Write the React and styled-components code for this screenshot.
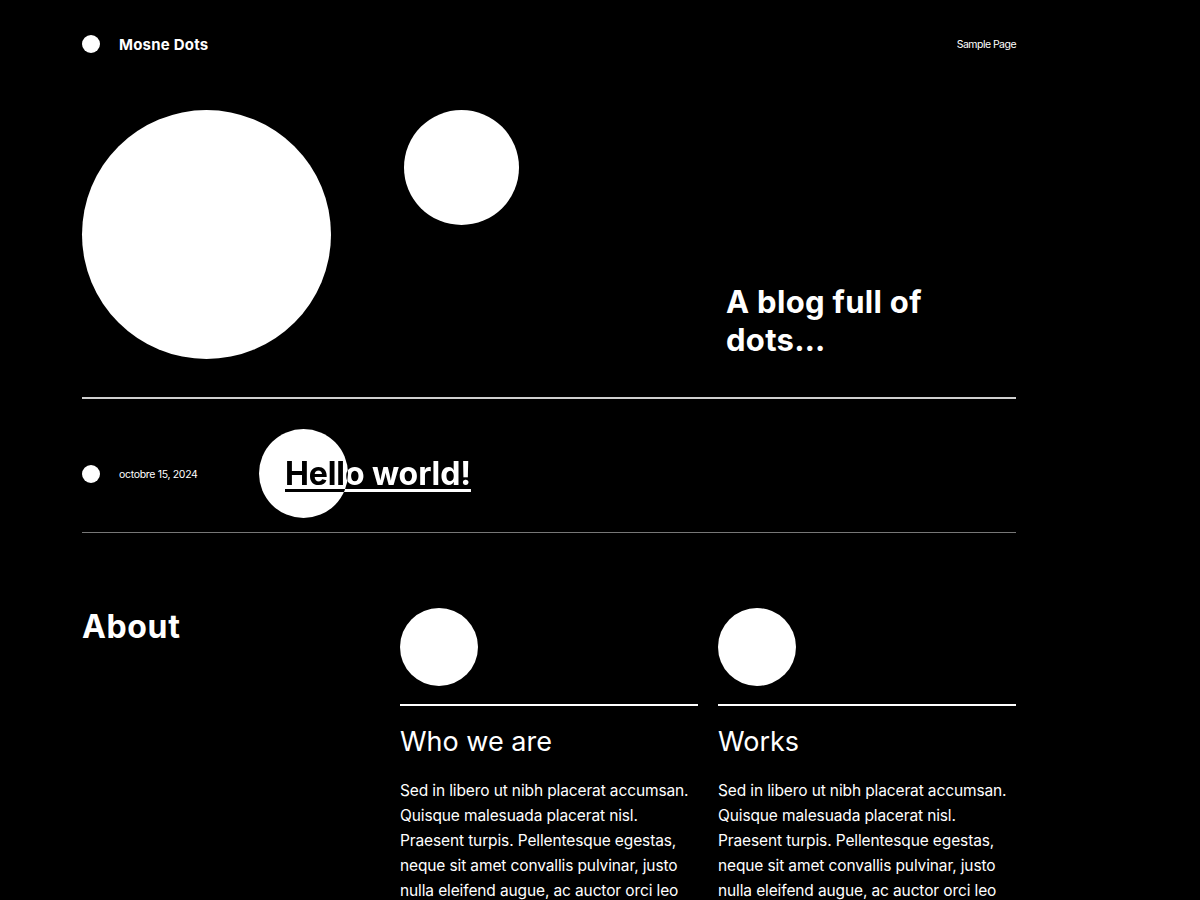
import React from "react";
import styled, { createGlobalStyle } from "styled-components";

const Global = createGlobalStyle`
  html, body { margin: 0; padding: 0; background: #000; }
  body {
    color: #fff;
    font-family: "Inter", "Liberation Sans", sans-serif;
    -webkit-font-smoothing: antialiased;
  }
`;

const Page = styled.div`
  width: 934px;
  padding: 0 0 0 82px;
`;

const Header = styled.header`
  height: 36px;
  padding-top: 26px;
  display: flex;
  align-items: center;
  justify-content: space-between;
`;

const Brand = styled.div`
  display: flex;
  align-items: center;
  gap: 19px;
`;

const Dot = styled.span`
  display: block;
  flex: none;
  width: ${(p) => p.$size}px;
  height: ${(p) => p.$size}px;
  border-radius: 50%;
  background: #fff;
`;

const BrandName = styled.span`
  font-size: 15px;
  font-weight: 700;
  letter-spacing: 0.015em;
`;

const NavLink = styled.a`
  font-size: 10.5px;
  color: #fff;
  text-decoration: none;
  letter-spacing: -0.05em;
`;

const Hero = styled.section`
  margin-top: 48px;
  padding-bottom: 38px;
  display: flex;
  align-items: flex-end;
  border-bottom: 2px solid #cfcfcf;
`;

const SmallCircle = styled(Dot)`
  align-self: flex-start;
  margin-left: 73px;
`;

const Tagline = styled.h1`
  margin: 0 0 0 207px;
  width: 250px;
  font-size: 31px;
  line-height: 38px;
  font-weight: 700;
  letter-spacing: 0.01em;
`;

const PostRow = styled.article`
  display: grid;
  grid-template-columns: 177px 1fr;
  align-items: center;
  padding: 30px 0 14px;
  border-bottom: 1px solid #777;
`;

const PostMeta = styled.div`
  display: flex;
  align-items: center;
  gap: 19px;
  padding-top: 1px;
`;

const DateText = styled.span`
  font-size: 10.5px;
  letter-spacing: -0.03em;
`;

const TitleWrap = styled.div`
  position: relative;
  height: 89px;
  display: flex;
  align-items: center;
  padding-left: 26px;
  isolation: isolate;
`;

const TitleCircle = styled.span`
  position: absolute;
  left: 0;
  top: 0;
  width: 89px;
  height: 89px;
  border-radius: 50%;
  background: #fff;
`;

const PostTitle = styled.h2`
  position: relative;
  margin: 0;
  padding-top: 1px;
  font-size: 32px;
  line-height: 38px;
  font-weight: 700;
  letter-spacing: -0.003em;
  mix-blend-mode: difference;
  a {
    color: #fff;
    text-decoration: underline;
    text-decoration-thickness: 3px;
    text-underline-offset: 4px;
  }
`;

const About = styled.section`
  display: grid;
  grid-template-columns: repeat(3, 298px);
  column-gap: 20px;
  padding-top: 75px;
`;

const AboutTitle = styled.h2`
  margin: 0;
  font-size: 32px;
  line-height: 38px;
  font-weight: 700;
  letter-spacing: 0.02em;
`;

const Card = styled.div`
  display: flex;
  flex-direction: column;
`;

const CardRule = styled.div`
  margin-top: 18px;
  height: 2px;
  background: #fff;
`;

const CardTitle = styled.h3`
  margin: 18px 0 0;
  font-size: 27px;
  line-height: 36px;
  font-weight: 400;
  letter-spacing: 0;
`;

const CardText = styled.p`
  margin: 18px 0 0;
  font-size: 15.5px;
  line-height: 25px;
  letter-spacing: -0.008em;
`;

const text =
  "Sed in libero ut nibh placerat accumsan. Quisque malesuada placerat nisl. Praesent turpis. Pellentesque egestas, neque sit amet convallis pulvinar, justo nulla eleifend augue, ac auctor orci leo non est.";

export default function App() {
  return (
    <>
      <Global />
      <Page>
        <Header>
          <Brand>
            <Dot $size={18} />
            <BrandName>Mosne Dots</BrandName>
          </Brand>
          <NavLink href="#">Sample Page</NavLink>
        </Header>
        <Hero>
          <Dot $size={249} />
          <SmallCircle $size={115} />
          <Tagline>A blog full of dots…</Tagline>
        </Hero>
        <PostRow>
          <PostMeta>
            <Dot $size={18} />
            <DateText>octobre 15, 2024</DateText>
          </PostMeta>
          <TitleWrap>
            <TitleCircle />
            <PostTitle>
              <a href="#">Hello world!</a>
            </PostTitle>
          </TitleWrap>
        </PostRow>
        <About>
          <AboutTitle>About</AboutTitle>
          <Card>
            <Dot $size={78} />
            <CardRule />
            <CardTitle>Who we are</CardTitle>
            <CardText>{text}</CardText>
          </Card>
          <Card>
            <Dot $size={78} />
            <CardRule />
            <CardTitle>Works</CardTitle>
            <CardText>{text}</CardText>
          </Card>
        </About>
      </Page>
    </>
  );
}
